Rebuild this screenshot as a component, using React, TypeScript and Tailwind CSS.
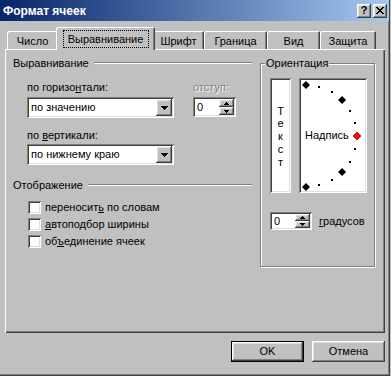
import React from "react";

const raised =
  "shadow-[inset_-1px_-1px_#404040,inset_1px_1px_#ffffff,inset_-2px_-2px_#808080,inset_2px_2px_#dfdfdf]";
const sunken =
  "shadow-[inset_1px_1px_#808080,inset_-1px_-1px_#ffffff,inset_2px_2px_#404040,inset_-2px_-2px_#dfdfdf]";

const DownArrow = () => (
  <svg width="7" height="4" viewBox="0 0 7 4" shapeRendering="crispEdges">
    <path d="M0 0H7V1H6V2H5V3H4V4H3V3H2V2H1V1H0Z" fill="#000" />
  </svg>
);

const SpinUp = () => (
  <svg width="5" height="3" viewBox="0 0 5 3" shapeRendering="crispEdges">
    <path d="M2 0H3V1H4V2H5V3H0V2H1V1H2Z" fill="#000" />
  </svg>
);

const SpinDown = () => (
  <svg width="5" height="3" viewBox="0 0 5 3" shapeRendering="crispEdges">
    <path d="M0 0H5V1H4V2H3V3H2V2H1V1H0Z" fill="#000" />
  </svg>
);

const Tab = ({ label, className }: { label: string; className: string }) => (
  <div
    className={`flex h-[18px] items-center justify-center rounded-t-[2px] pt-[3px] shadow-[inset_1px_1px_#ffffff,inset_-1px_0_#404040,inset_-2px_0_#808080] ${className}`}
  >
    {label}
  </div>
);

const GroupHead = ({ label, className }: { label: string; className?: string }) => (
  <div className={`flex h-[12px] items-center ${className ?? ""}`}>
    <span className="pl-[1px] pr-[5px] leading-[12px]">{label}</span>
    <div className="h-[2px] flex-1 border-t border-b border-t-[#808080] border-b-white" />
  </div>
);

const Combo = ({ value }: { value: string }) => (
  <div className={`flex h-[21px] w-[147px] items-center bg-white p-[2px] ${sunken}`}>
    <span className="flex-1 pl-[2px] leading-[17px]">{value}</span>
    <div className={`flex h-[17px] w-[16px] items-center justify-center bg-[#c0c0c0] ${raised}`}>
      <DownArrow />
    </div>
  </div>
);

const Spin = ({ className }: { className: string }) => (
  <div className={`flex items-stretch bg-white p-[2px] ${sunken} ${className}`}>
    <span className="flex flex-1 items-center pl-[2px]">0</span>
    <div className="flex w-[15px] flex-col">
      <div className={`flex flex-1 items-center justify-center bg-[#c0c0c0] ${raised}`}>
        <SpinUp />
      </div>
      <div className={`flex flex-1 items-center justify-center bg-[#c0c0c0] ${raised}`}>
        <SpinDown />
      </div>
    </div>
  </div>
);

const Check = ({ children }: { children: React.ReactNode }) => (
  <div className="flex h-[17px] items-center pl-[16px]">
    <div className={`h-[13px] w-[13px] bg-white ${sunken}`} />
    <span className="ml-[4px]">{children}</span>
  </div>
);

// точки полукруга ориентации, центр (7,58), радиус 51
const dots = [90, 75, 60, 45, 30, 15, 0, -15, -30, -45, -60, -75, -90].map((a) => {
  const r = (a * Math.PI) / 180;
  return { a, x: 7 + 51 * Math.cos(r), y: 58 - 51 * Math.sin(r) };
});

const Dial = () => (
  <div className={`relative flex h-[115px] w-[68px] items-center bg-white pl-[6px] ${sunken}`}>
    <svg className="absolute inset-0" width="68" height="115" viewBox="0 0 68 115">
      {dots.map((d) =>
        d.a === 0 ? (
          <path
            key={d.a}
            d={`M${d.x} ${d.y - 4}l4 4-4 4-4-4z`}
            fill="#ff0000"
            stroke="#800000"
            strokeWidth="0.6"
          />
        ) : d.a % 45 === 0 ? (
          <path key={d.a} d={`M${d.x} ${d.y - 4}l4 4-4 4-4-4z`} fill="#000" />
        ) : (
          <rect key={d.a} x={Math.round(d.x) - 1} y={Math.round(d.y) - 1} width="2" height="2" fill="#000" />
        )
      )}
    </svg>
    <span className="relative">Надпись</span>
  </div>
);

export default function App() {
  return (
    <div
      className="h-[376px] w-[391px] overflow-hidden bg-[#c0c0c0] text-[11px] text-black"
      style={{ fontFamily: '"Liberation Sans", Arial, sans-serif' }}
    >
      <div className="flex h-[376px] w-[390px] flex-col shadow-[inset_-1px_-1px_#404040,inset_-2px_-2px_#808080]">
        {/* заголовок окна */}
        <div className="flex h-[21px] w-[389px] items-center bg-linear-to-r from-[#0a246a] to-[#a6caf0] pl-[3px] pr-[2px]">
          <span className="flex-1 text-[12px] font-bold text-white">Формат ячеек</span>
          <div className="flex gap-[2px]">
            <div
              className={`flex h-[14px] w-[14px] items-center justify-center bg-[#c0c0c0] text-[11px] font-bold leading-none ${raised}`}
            >
              ?
            </div>
            <div className={`flex h-[14px] w-[14px] items-center justify-center bg-[#c0c0c0] ${raised}`}>
              <svg width="8" height="7" viewBox="0 0 8 7" shapeRendering="crispEdges">
                <path
                  d="M0 0H2V1H3V2H5V1H6V0H8V1H7V2H6V3H5V4H6V5H7V6H8V7H6V6H5V5H3V6H2V7H0V6H1V5H2V4H3V3H2V2H1V1H0Z"
                  fill="#000"
                />
              </svg>
            </div>
          </div>
        </div>

        {/* вкладки */}
        <div className="ml-[5px] mt-[6px] flex h-[22px] items-end pl-[2px]">
          <Tab label="Число" className="w-[51px]" />
          <div className="relative z-10 -mx-[2px] -mb-[1px] flex h-[23px] w-[99px] justify-center rounded-t-[2px] bg-[#c0c0c0] pt-[3px] shadow-[inset_1px_1px_#ffffff,inset_-1px_0_#404040,inset_-2px_0_#808080]">
            <span className="flex h-[18px] w-[86px] items-center justify-center border border-dotted border-black">
              Выравнивание
            </span>
          </div>
          <Tab label="Шрифт" className="w-[51px]" />
          <Tab label="Граница" className="w-[63px]" />
          <Tab label="Вид" className="w-[53px]" />
          <Tab label="Защита" className="w-[56px]" />
        </div>

        {/* панель вкладки */}
        <div className="ml-[5px] flex h-[284px] w-[380px] gap-[8px] pl-[7px] pt-[8px] shadow-[inset_1px_1px_#ffffff,inset_-1px_-1px_#404040,inset_-2px_-2px_#808080]">
          <div className="flex w-[240px] flex-col">
            <GroupHead label="Выравнивание" />
            <div className="mt-[11px] flex pl-[15px]">
              <div className="flex flex-col">
                <span className="h-[14px] leading-[14px]">
                  по горизо<u>н</u>тали:
                </span>
                <div className="mt-[3px]">
                  <Combo value="по значению" />
                </div>
              </div>
              <div className="ml-[19px] flex flex-col">
                <span className="h-[14px] leading-[14px] text-[#808080] [text-shadow:1px_1px_0_#ffffff]">
                  отступ:
                </span>
                <div className="mt-[3px]">
                  <Spin className="h-[20px] w-[43px]" />
                </div>
              </div>
            </div>
            <div className="mt-[10px] flex flex-col pl-[15px]">
              <span className="h-[14px] leading-[14px]">
                по <u>в</u>ертикали:
              </span>
              <div className="mt-[2px]">
                <Combo value="по нижнему краю" />
              </div>
            </div>
            <GroupHead label="Отображение" className="mt-[14px]" />
            <div className="mt-[8px] flex flex-col">
              <Check>
                переносит<u>ь</u> по словам
              </Check>
              <Check>
                <u>а</u>втоподбор ширины
              </Check>
              <Check>
                об<u>ъ</u>единение ячеек
              </Check>
            </div>
          </div>

          {/* ориентация */}
          <div className="relative mt-[6px] h-[204px] w-[115px] border border-[#808080] shadow-[1px_1px_#ffffff,inset_1px_1px_#ffffff]">
            <span className="absolute -top-[7px] left-[4px] bg-[#c0c0c0] px-[1px] leading-[12px]">Ориентация</span>
            <div className="flex gap-[8px] pl-[9px] pt-[14px]">
              <div
                className={`flex h-[115px] w-[21px] flex-col items-center justify-center bg-white pt-[2px] leading-[12.75px] ${sunken}`}
              >
                <span>Т</span>
                <span>е</span>
                <span>к</span>
                <span>с</span>
                <span>т</span>
              </div>
              <Dial />
            </div>
            <div className="mt-[19px] flex items-center gap-[7px] pl-[9px]">
              <Spin className="h-[18px] w-[42px]" />
              <span>
                <u>г</u>радусов
              </span>
            </div>
          </div>
        </div>

        {/* кнопки */}
        <div className="mt-[8px] flex w-[385px] justify-end gap-[8px]">
          <div className={`flex h-[21px] w-[73px] items-center justify-center border border-black ${raised}`}>
            OK
          </div>
          <div className={`flex h-[21px] w-[73px] items-center justify-center ${raised}`}>Отмена</div>
        </div>
      </div>
    </div>
  );
}
